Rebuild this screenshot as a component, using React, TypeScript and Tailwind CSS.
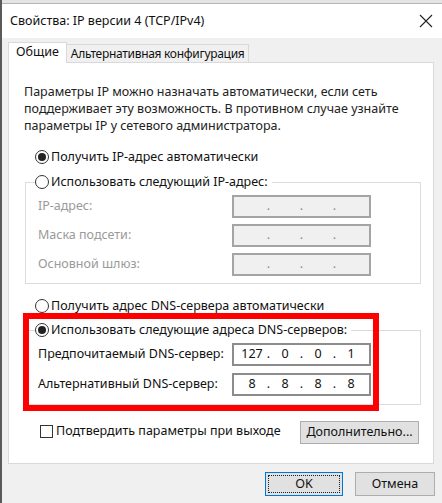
import React from "react";

const font = "font-['Noto_Sans',sans-serif]";

function Radio({ checked }: { checked?: boolean }) {
  return (
    <span className="w-[14px] h-[14px] rounded-full border border-[#333] bg-white flex items-center justify-center shrink-0">
      {checked && <span className="w-[8px] h-[8px] rounded-full bg-[#222]" />}
    </span>
  );
}

function RadioRow({ checked, label }: { checked?: boolean; label: string }) {
  return (
    <div className="flex items-center gap-[2px] h-[18px] text-[12.5px] text-[#111]">
      <Radio checked={checked} />
      <span>{label}</span>
    </div>
  );
}

function IpBox({ values, disabled }: { values?: string[]; disabled?: boolean }) {
  const v = values ?? ["", "", "", ""];
  return (
    <div
      className={
        "w-[139px] h-[23px] border-2 flex items-center pl-[5px] text-[12.5px] " +
        (disabled ? "bg-[#f0f0f0] border-[#a4a4a4] text-[#8a8a8a]" : "bg-white border-[#8c8c8c] text-[#111]")
      }
    >
      {v.map((s, i) => (
        <React.Fragment key={i}>
          <span className="w-[26px] text-center">{s}</span>
          {i < 3 && <span className="w-[7px] text-center">.</span>}
        </React.Fragment>
      ))}
    </div>
  );
}

function FieldRow({ label, disabled, values }: { label: string; disabled?: boolean; values?: string[] }) {
  return (
    <div className="flex items-center">
      <span className={"w-[194px] text-[12.5px] " + (disabled ? "text-[#9a9a9a]" : "text-[#111]")}>{label}</span>
      <IpBox disabled={disabled} values={values} />
    </div>
  );
}

export default function App() {
  return (
    <div className={`${font} w-[442px] h-[503px] bg-[#f0f0f0] border-l-2 border-[#5a5a5a] flex flex-col overflow-hidden`}>
      <div className="h-[4px] bg-[#e4e4e4] border-b border-[#b5b5b5]" />
      <div className="h-[34px] bg-white flex items-center justify-between pl-[8px] pr-[8px]">
        <span className="text-[12.5px] text-[#111]">Свойства: IP версии 4 (TCP/IPv4)</span>
        <svg width="14" height="14" viewBox="0 0 14 14" className="mr-[1px]">
          <path d="M1 1 L13 13 M13 1 L1 13" stroke="#222" strokeWidth="1.1" fill="none" />
        </svg>
      </div>

      <div className="flex items-end ml-[6px] mt-[4px] relative z-10">
        <div className="h-[21px] bg-white border border-b-0 border-[#d9d9d9] px-[7px] flex items-center text-[12.5px] text-[#111] -mb-px pb-px">
          Общие
        </div>
        <div className="h-[18px] bg-[#f0f0f0] border border-b-0 border-l-0 border-[#d9d9d9] px-[4px] flex items-center text-[12px] tracking-[-0.3px] text-[#111]">
          Альтернативная конфигурация
        </div>
      </div>

      <div className="relative ml-[6px] mr-[8px] h-[402px] bg-white border border-[#d9d9d9] flex flex-col">
        <p className="mt-[20px] ml-[15px] text-[12.5px] leading-[17px] text-[#222]">
          Параметры IP можно назначать автоматически, если сеть
          <br />
          поддерживает эту возможность. В противном случае узнайте
          <br />
          параметры IP у сетевого администратора.
        </p>

        <div className="mt-[14px] ml-[26px]">
          <RadioRow checked label="Получить IP-адрес автоматически" />
        </div>

        <fieldset className="mt-[7px] ml-[16px] mr-[12px] border border-[#dcdcdc] pl-[12px] pb-[7px]">
          <legend className="-ml-[3px] pr-[4px]">
            <RadioRow label="Использовать следующий IP-адрес:" />
          </legend>
          <div className="mt-[4px] flex flex-col gap-[6px]">
            <FieldRow label="IP-адрес:" disabled />
            <FieldRow label="Маска подсети:" disabled />
            <FieldRow label="Основной шлюз:" disabled />
          </div>
        </fieldset>

        <div className="mt-[13px] ml-[26px]">
          <RadioRow label="Получить адрес DNS-сервера автоматически" />
        </div>

        <fieldset className="mt-[6px] ml-[16px] mr-[12px] border border-[#dcdcdc] pl-[12px] pb-[8px]">
          <legend className="-ml-[3px] pr-[4px]">
            <RadioRow checked label="Использовать следующие адреса DNS-серверов:" />
          </legend>
          <div className="mt-[4px] flex flex-col gap-[7px]">
            <FieldRow label="Предпочитаемый DNS-сервер:" values={["127", "0", "0", "1"]} />
            <FieldRow label="Альтернативный DNS-сервер:" values={["8", "8", "8", "8"]} />
          </div>
        </fieldset>

        <div className="mt-[16px] ml-[31px] mr-[14px] flex items-start justify-between">
          <div className="flex items-center gap-[3px] mt-[1px] text-[12.5px] text-[#111]">
            <span className="w-[13px] h-[13px] border border-[#333] bg-white" />
            <span>Подтвердить параметры при выходе</span>
          </div>
          <button className="w-[119px] h-[23px] bg-[#e1e1e1] border border-[#adadad] text-[12.5px] text-[#111]">
            Дополнительно...
          </button>
        </div>

        <div className="absolute left-[14px] top-[250px] w-[356px] h-[98px] border-[6px] border-[#ff0000] pointer-events-none" />
      </div>

      <div className="mt-[8px] flex justify-end gap-[12px] pr-[7px]">
        <button className="w-[78px] h-[24px] bg-[#e1e1e1] border border-[#0078d7] p-[2px] text-[12.5px] text-[#111]">
          <span className="w-full h-full flex items-center justify-center border border-dotted border-[#222]">OK</span>
        </button>
        <button className="w-[80px] h-[24px] bg-[#e1e1e1] border border-[#adadad] text-[12.5px] text-[#111]">
          Отмена
        </button>
      </div>
    </div>
  );
}
